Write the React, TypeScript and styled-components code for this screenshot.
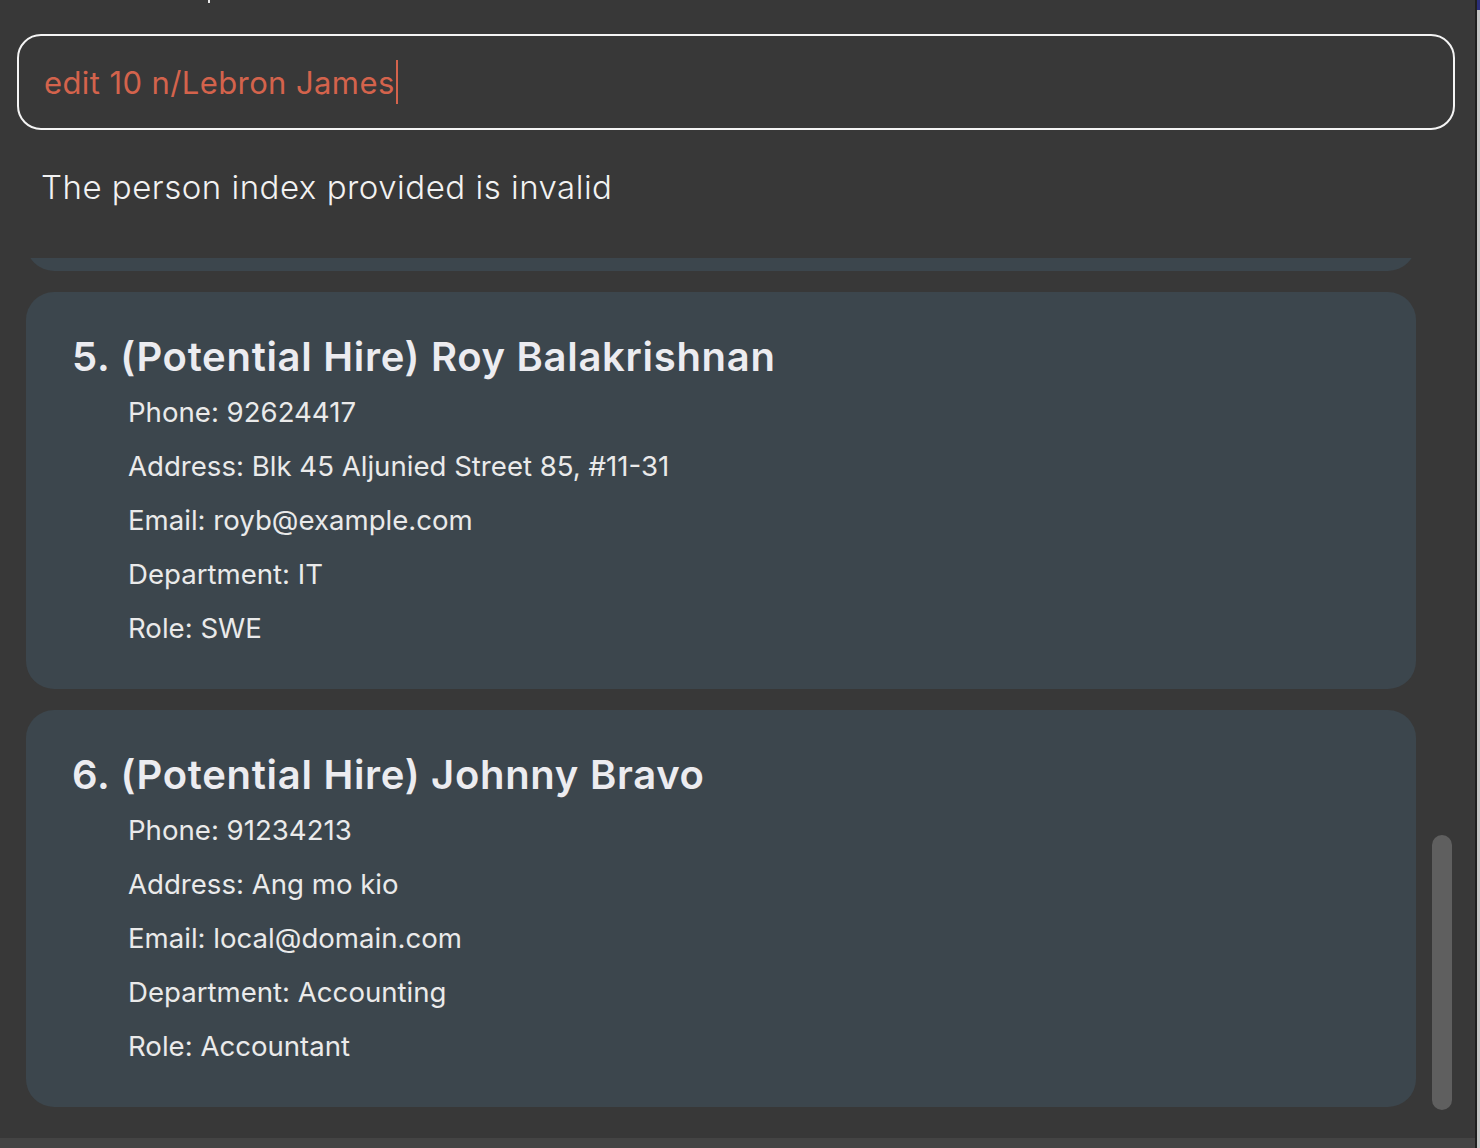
import React from "react";
import styled, { createGlobalStyle } from "styled-components";

const Global = createGlobalStyle`
  html, body { margin: 0; padding: 0; background: #383838; }
  body { font-family: Inter, "Noto Sans", sans-serif; }
`;

const Screen = styled.div`
  display: flex;
  width: 1480px;
  height: 1148px;
  overflow: hidden;
`;

const Window = styled.div`
  width: 1475px;
  display: flex;
  flex-direction: column;
  background: #383838;
`;

const WindowEdge = styled.div`
  width: 2px;
  background: #1f1f1f;
`;

const Desktop = styled.div`
  flex: 1;
  background: linear-gradient(#2b2f7a 0 10px, #c4c4c4 10px);
`;

const TopClip = styled.div`
  height: 3px;
  padding-left: 208px;
  display: flex;
`;

const Descender = styled.div`
  width: 2px;
  height: 3px;
  background: #e8e8e8;
`;

const CommandBox = styled.div`
  margin: 31px 20px 0 17px;
  height: 92px;
  border: 2px solid #f4f4f4;
  border-radius: 24px;
  display: flex;
  align-items: center;
  padding-left: 25px;
`;

const CommandText = styled.span`
  font-size: 31px;
  color: #d4634c;
  letter-spacing: 0.4px;
`;

const Caret = styled.span`
  display: inline-block;
  width: 2px;
  height: 44px;
  background: #d4634c;
  margin-left: 1px;
  vertical-align: middle;
`;

const Result = styled.div`
  height: 128px;
  padding: 37px 0 0 41px;
  box-sizing: border-box;
  font-size: 33px;
  font-weight: 300;
  letter-spacing: 0.5px;
  color: #f2f2f2;
`;

const ListArea = styled.div`
  flex: 1;
  display: flex;
  min-height: 0;
`;

const List = styled.div`
  width: 1390px;
  margin-left: 26px;
  display: flex;
  flex-direction: column;
  gap: 21px;
  overflow: hidden;
`;

const ScrolledOff = styled.div`
  height: 13px;
  overflow: hidden;
  display: flex;
  flex-direction: column;
  justify-content: flex-end;
  flex-shrink: 0;
`;

const Card = styled.div<{ $h?: number }>`
  flex-shrink: 0;
  background: #3c464d;
  border-radius: 28px;
  padding: 40px 0 34px 46px;
  ${(p) => (p.$h ? `height: ${p.$h}px; box-sizing: border-box;` : "")}
`;

const Title = styled.div`
  font-size: 40px;
  font-weight: 600;
  line-height: 50px;
  letter-spacing: 0.7px;
  color: #ececf0;
`;

const Fields = styled.div`
  margin-top: 3px;
  padding-left: 56px;
  display: flex;
  flex-direction: column;
`;

const Field = styled.div`
  font-size: 27.6px;
  line-height: 54px;
  color: #eaeaea;
`;

const Track = styled.div`
  flex: 1;
  display: flex;
  flex-direction: column;
  justify-content: flex-end;
  padding: 0 0 28px 16px;
`;

const Thumb = styled.div`
  width: 20px;
  height: 275px;
  border-radius: 10px;
  background: #5f5f5f;
`;

const StatusStrip = styled.div`
  height: 10px;
  background: #444444;
`;

type Person = {
  index: number;
  name: string;
  phone: string;
  address: string;
  email: string;
  department: string;
  role: string;
};

const people: Person[] = [
  {
    index: 5,
    name: "Roy Balakrishnan",
    phone: "92624417",
    address: "Blk 45 Aljunied Street 85, #11-31",
    email: "royb@example.com",
    department: "IT",
    role: "SWE",
  },
  {
    index: 6,
    name: "Johnny Bravo",
    phone: "91234213",
    address: "Ang mo kio",
    email: "local@domain.com",
    department: "Accounting",
    role: "Accountant",
  },
];

function PersonCard({ p }: { p: Person }) {
  return (
    <Card>
      <Title>
        {p.index}. (Potential Hire) {p.name}
      </Title>
      <Fields>
        <Field>Phone: {p.phone}</Field>
        <Field>Address: {p.address}</Field>
        <Field>Email: {p.email}</Field>
        <Field>Department: {p.department}</Field>
        <Field>Role: {p.role}</Field>
      </Fields>
    </Card>
  );
}

export default function App() {
  return (
    <>
      <Global />
      <Screen>
        <Window>
          <TopClip>
            <Descender />
          </TopClip>
          <CommandBox>
            <CommandText>edit 10 n/Lebron James</CommandText>
            <Caret />
          </CommandBox>
          <Result>The person index provided is invalid</Result>
          <ListArea>
            <List>
              <ScrolledOff>
                <Card $h={397} />
              </ScrolledOff>
              {people.map((p) => (
                <PersonCard key={p.index} p={p} />
              ))}
            </List>
            <Track>
              <Thumb />
            </Track>
          </ListArea>
          <StatusStrip />
        </Window>
        <WindowEdge />
        <Desktop />
      </Screen>
    </>
  );
}
